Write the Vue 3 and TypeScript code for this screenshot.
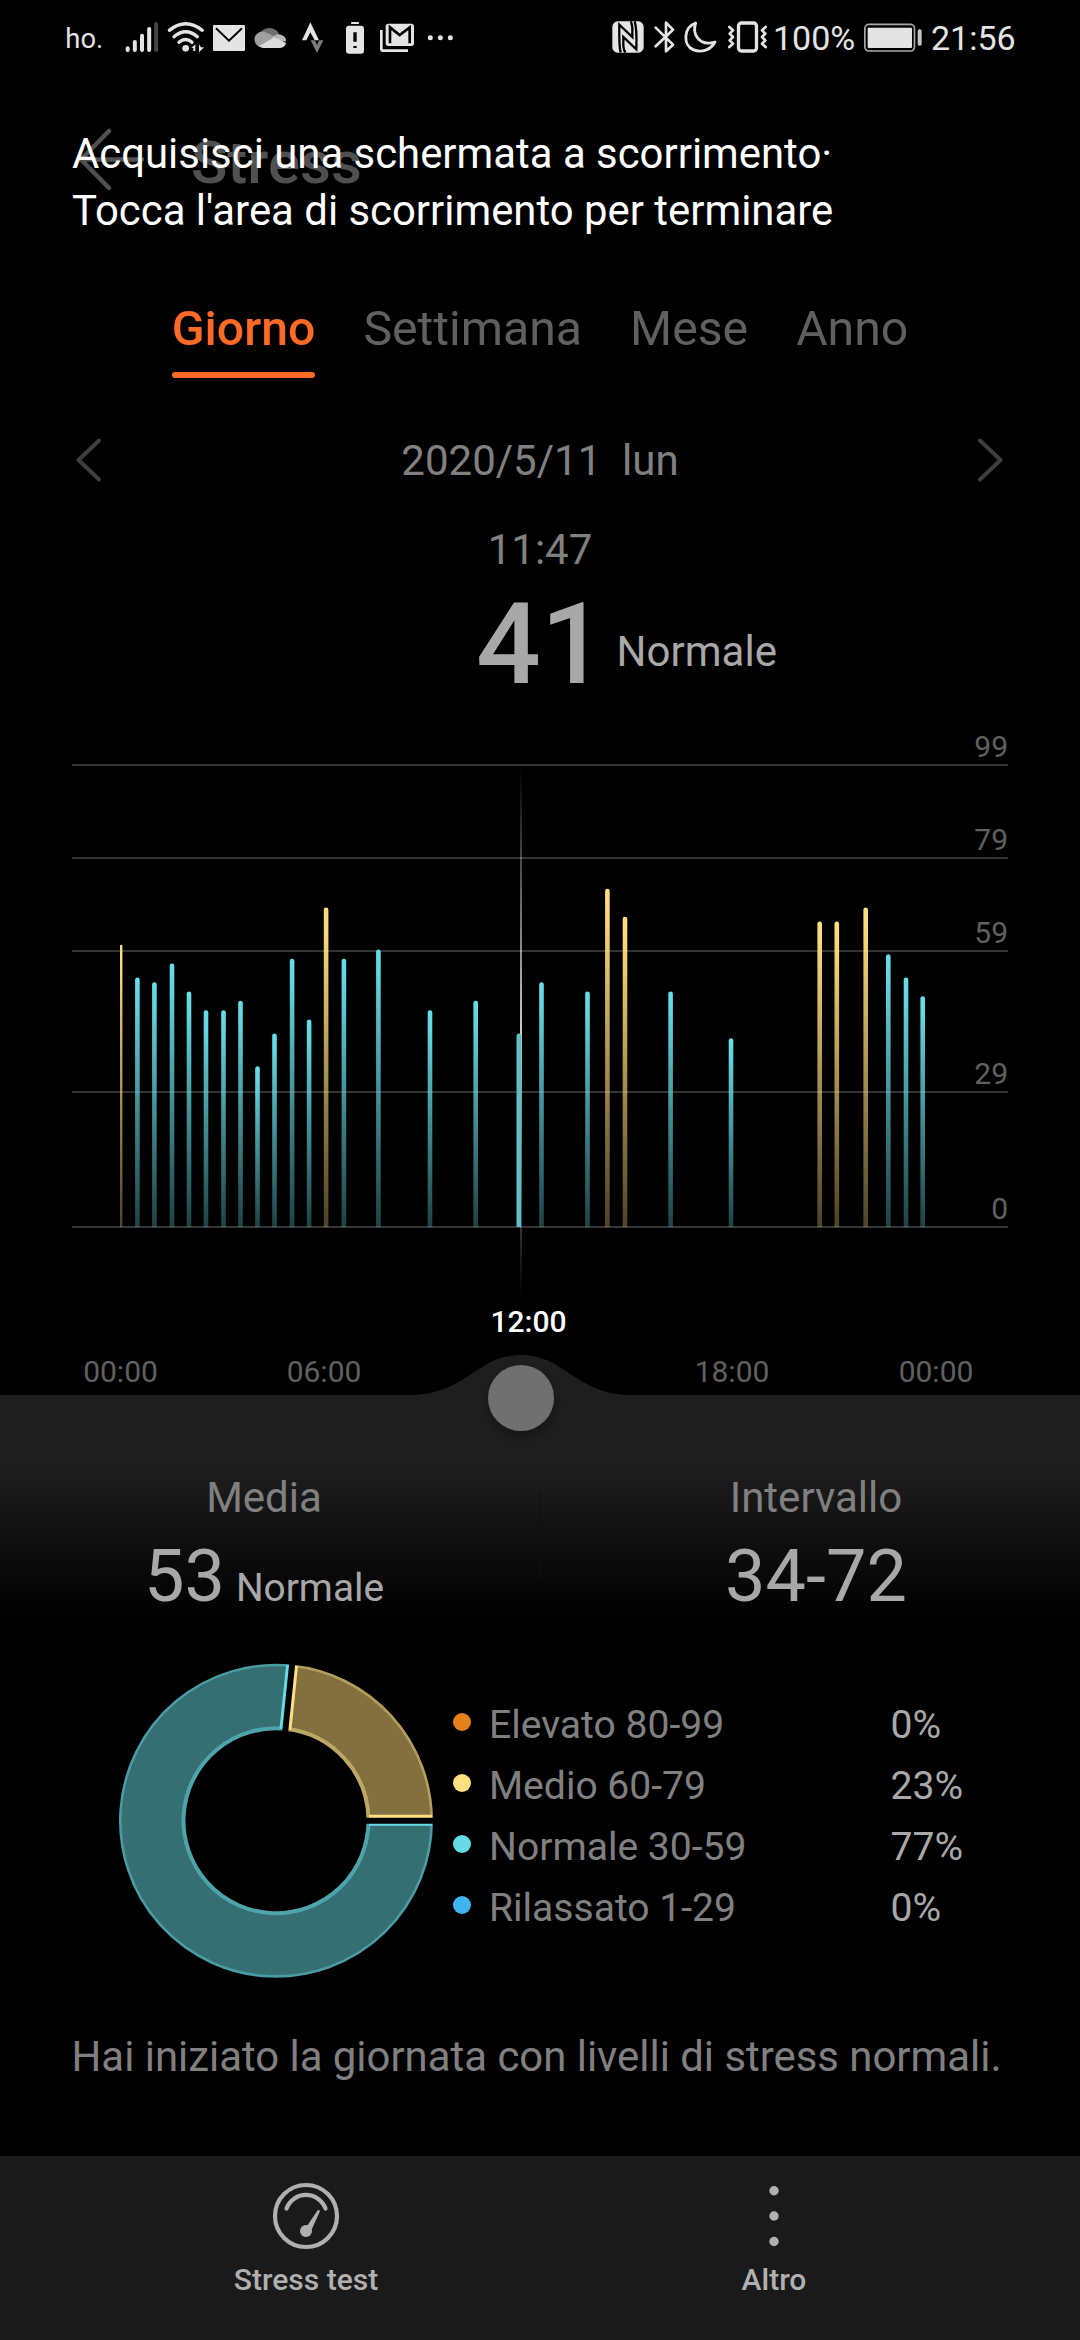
<script setup lang="ts">
interface Reading {
  x: number
  value: number
  width?: number
}

interface Level {
  name: string
  percent: string
  color: string
}

const tabs: string[] = ['Giorno', 'Settimana', 'Mese', 'Anno']
const activeTab = 'Giorno'

const BASE = 1226
const STEP = 4.67

const readings: Reading[] = [
  { x: 121.2, value: 60, width: 2.4 },
  { x: 137.4, value: 53 },
  { x: 154.4, value: 52 },
  { x: 172, value: 56 },
  { x: 189, value: 50 },
  { x: 206, value: 46 },
  { x: 223.5, value: 46 },
  { x: 240.5, value: 48 },
  { x: 257.5, value: 34 },
  { x: 274.5, value: 41 },
  { x: 292.1, value: 57 },
  { x: 309.1, value: 44 },
  { x: 326.1, value: 68 },
  { x: 343.9, value: 57 },
  { x: 378.4, value: 59 },
  { x: 430, value: 46 },
  { x: 475.7, value: 48 },
  { x: 541.5, value: 52 },
  { x: 587.5, value: 50 },
  { x: 607.4, value: 72 },
  { x: 625, value: 66 },
  { x: 670.6, value: 50 },
  { x: 731, value: 40 },
  { x: 819.7, value: 65 },
  { x: 836.8, value: 65 },
  { x: 865.7, value: 68 },
  { x: 888.3, value: 58 },
  { x: 906, value: 53 },
  { x: 922.7, value: 49 },
]

const grid = [
  { y: 764, label: '99' },
  { y: 857, label: '79' },
  { y: 950, label: '59' },
  { y: 1091, label: '29' },
  { y: 1226, label: '0' },
]

const hours = [
  { x: 120.5, label: '00:00' },
  { x: 324, label: '06:00' },
  { x: 732, label: '18:00' },
  { x: 936, label: '00:00' },
]

const levels: Level[] = [
  { name: 'Elevato 80-99', percent: '0%', color: '#e6801a' },
  { name: 'Medio 60-79', percent: '23%', color: '#ffdf80' },
  { name: 'Normale 30-59', percent: '77%', color: '#67dbe5' },
  { name: 'Rilassato 1-29', percent: '0%', color: '#40b4f2' },
]

const barTop = (value: number): number => BASE - 1 - value * STEP

const barPath = (r: Reading): string => {
  const half = (r.width ?? 4.6) / 2
  const top = barTop(r.value)
  return `M${r.x - half} ${BASE + 1}V${top + half}A${half} ${half} 0 0 1 ${r.x + half} ${top + half}V${BASE + 1}Z`
}

// Donut geometry; angles are in degrees, counter-clockwise from three o'clock.
const CX = 176
const CY = 180.7
const SPLIT = 84.1

const point = (radius: number, angle: number): string => {
  const a = (angle * Math.PI) / 180
  return `${(CX + radius * Math.cos(a)).toFixed(2)} ${(CY - radius * Math.sin(a)).toFixed(2)}`
}

const arc = (radius: number, from: number, to: number): string =>
  `M${point(radius, from)}A${radius} ${radius} 0 ${to - from > 180 ? 1 : 0} 0 ${point(radius, to)}`

const sector = (from: number, to: number): string => {
  const large = to - from > 180 ? 1 : 0
  return `${arc(156, from, to)}L${point(93, to)}A93 93 0 ${large} 1 ${point(93, from)}Z`
}
</script>

<template>
  <div class="screen">
    <div class="status">
      <svg width="440" height="80" viewBox="0 0 1320 240" fill="#e4e4e4">
        <text x="76" y="143" font-size="82">ho.</text>
        <g stroke="#e4e4e4" stroke-width="12" stroke-linecap="round">
          <path d="M263 145V150M284.500 126V150M306 107V150M327.500 87V150" />
          <path d="M348.500 72V150" stroke="#454545" />
        </g>
        <g fill="none" stroke="#e4e4e4" stroke-width="10" stroke-linecap="round">
          <path d="M388 91Q437 52 487 91" />
          <path d="M402 110Q437 80 472 110" />
          <path d="M417 127Q437 110 456 127" />
        </g>
        <circle cx="437" cy="145" r="10" />
        <path d="M466 133v20h-6v-9h-6zM477 133v24l15-15h-9z" />
        <rect x="519" y="75" width="96" height="78" rx="4" />
        <path d="M528 85L567 122L606 85" fill="none" stroke="#000" stroke-width="6" />
        <path d="M664 94A33 33 0 0 1 717 101L690 122L655 110Z" fill="#6e6e6e" />
        <path d="M657 140A24 24 0 0 1 655 98Q670 88 707 112L662 142Z" fill="#a0a0a0" />
        <path d="M690 122Q706 97 725 105Q740 112 738 124Q720 126 707 112Z" fill="#b8b8b8" />
        <path d="M658 138L704 111L738 129Q735 143 720 144H668Q662 143 658 138Z" fill="#dcdcdc" />
        <path d="M786 121L811 67L837 121H824L811 97L799 121Z" />
        <path d="M812 121H824L831 135L838 121H850L831 159Z" fill="#7c7c7c" />
        <rect x="933" y="66" width="24" height="6" rx="2" />
        <rect x="918" y="77" width="54" height="84" rx="9" />
        <path d="M945 97V125M945 138V144" stroke="#000" stroke-width="10" />
        <path d="M1024 90V146Q1024 152 1030 152H1104" fill="none" stroke="#e4e4e4" stroke-width="8" />
        <rect x="1037" y="71" width="85" height="67" rx="8" />
        <path d="M1050 130V82L1079 105L1109 82V130" fill="none" stroke="#000" stroke-width="8" />
        <circle cx="1171" cy="113" r="7.500" />
        <circle cx="1201" cy="113" r="7.500" />
        <circle cx="1231" cy="113" r="7.500" />
      </svg>
      <svg width="450" height="80" viewBox="0 0 1350 240" fill="#e4e4e4">
        <rect x="67" y="64" width="94" height="94" rx="16" />
        <path
          d="M92 157Q87 140 88 74L127 111V84Q126 70 122 64M134 64Q141 85 139 148L100 111V138Q102 152 106 158"
          fill="none"
          stroke="#000"
          stroke-width="7"
        />
        <path
          d="M197 83L249 134L228 154V68L249 89L197 139"
          fill="none"
          stroke="#e4e4e4"
          stroke-width="8"
          stroke-linecap="round"
          stroke-linejoin="round"
        />
        <path
          d="M317 69C278 83 280 136 309 149C335 160 362 150 375 126C350 134 333 128 322 113C312 99 312 84 317 69Z"
          fill="none"
          stroke="#e4e4e4"
          stroke-width="8.500"
          stroke-linejoin="round"
        />
        <rect x="445.500" y="69" width="54" height="84" rx="9" fill="none" stroke="#e4e4e4" stroke-width="10" />
        <path
          d="M418 81L429 91L419 101L429 111L419 121L429 131L418 141M527 81L516 91L526 101L516 111L526 121L516 131L527 141"
          fill="none"
          stroke="#e4e4e4"
          stroke-width="8"
          stroke-linecap="round"
          stroke-linejoin="round"
        />
        <text x="549" y="150" font-size="102">100%</text>
        <rect x="824.500" y="73" width="149" height="80" rx="12" fill="none" stroke="#a8a8a8" stroke-width="5" />
        <rect x="833" y="83" width="133" height="61" rx="3" />
        <rect x="983" y="88" width="12" height="49" rx="5" fill="#c4c4c4" />
        <text x="1023" y="150" font-size="102">21:56</text>
      </svg>
    </div>

    <header class="header">
      <svg class="back" width="78" height="70" viewBox="0 0 78 70">
        <path d="M37 4L9 32.500L37 61M10 32.500H70" />
      </svg>
      <h1 class="title">Stress</h1>
      <p class="notice">Acquisisci una schermata a scorrimento·<br />Tocca l'area di scorrimento per terminare</p>
    </header>

    <nav class="tabs">
      <div v-for="tab in tabs" :key="tab" class="tab" :class="{ active: tab === activeTab }">{{ tab }}</div>
    </nav>

    <div class="date">
      <svg class="chevron" width="40" height="60" viewBox="0 0 40 60"><path d="M29 9.500L8.500 29L29 48.500" /></svg>
      <span class="day">2020/5/11&nbsp; lun</span>
      <svg class="chevron" width="40" height="60" viewBox="0 0 40 60"><path d="M10 9.500L30.500 29L10 48.500" /></svg>
    </div>

    <div class="time">11:47</div>
    <div class="current">
      <span class="number">41</span>
      <span class="state">Normale</span>
    </div>

    <svg class="chart" width="1080" height="715" viewBox="0 735 1080 715">
      <defs>
        <linearGradient id="normal" x1="0" y1="0" x2="0" y2="1">
          <stop offset="0" stop-color="#67dfea" />
          <stop offset="0.1" stop-color="#67dfea" stop-opacity="0.95" />
          <stop offset="1" stop-color="#67dbe3" stop-opacity="0.3" />
        </linearGradient>
        <linearGradient id="medium" x1="0" y1="0" x2="0" y2="1">
          <stop offset="0" stop-color="#ffdf80" />
          <stop offset="0.1" stop-color="#ffdc78" stop-opacity="0.97" />
          <stop offset="1" stop-color="#ffdc80" stop-opacity="0.3" />
        </linearGradient>
        <linearGradient id="cursor" x1="0" y1="0" x2="0" y2="1">
          <stop offset="0" stop-color="#fff" stop-opacity="0" />
          <stop offset="0.5" stop-color="#fff" stop-opacity="0.8" />
          <stop offset="1" stop-color="#fff" stop-opacity="0" />
        </linearGradient>
        <filter id="shade" x="-50%" y="-50%" width="200%" height="200%">
          <feDropShadow dx="0" dy="6" stdDeviation="7" flood-color="#000" flood-opacity="0.3" />
        </filter>
      </defs>

      <g v-for="line in grid" :key="line.label">
        <rect x="72" :y="line.y" width="936" height="2" fill="#333" />
        <text class="tick" x="1008" :y="line.y - 7.5" text-anchor="end">{{ line.label }}</text>
      </g>

      <path
        v-for="r in readings"
        :key="r.x"
        :d="barPath(r)"
        :fill="r.value >= 60 ? 'url(#medium)' : 'url(#normal)'"
      />
      <rect x="520" y="766" width="2" height="530" fill="url(#cursor)" />
      <path :d="barPath({ x: 518.8, value: 41 })" fill="#5bbfc8" />

      <text v-for="h in hours" :key="h.x" class="tick" :x="h.x" y="1381.5" text-anchor="middle">{{ h.label }}</text>
      <text class="tick selected" x="528.5" y="1331.5" text-anchor="middle">12:00</text>

      <path d="M0 1395H410C467 1395 476 1355 521 1355S575 1395 632 1395H1080V1450H0Z" fill="#1e1e1e" />
      <circle cx="521" cy="1398" r="33" fill="#6f6f6f" filter="url(#shade)" />
    </svg>

    <section class="summary">
      <div class="metric">
        <div class="caption">Media</div>
        <div class="figure">53<span class="unit">Normale</span></div>
      </div>
      <div class="divider"></div>
      <div class="metric">
        <div class="caption">Intervallo</div>
        <div class="figure">34-72</div>
      </div>
    </section>

    <section class="breakdown">
      <svg width="350" height="360" viewBox="0 0 350 360" fill="none">
        <path :d="sector(SPLIT, 360)" fill="#356f72" />
        <path :d="arc(155.7, SPLIT, 360)" stroke="#4a9ba3" stroke-width="2.600" />
        <path :d="arc(92.5, SPLIT, 360)" stroke="#4ea4ab" stroke-width="4" />
        <path :d="sector(0, SPLIT)" fill="#82713f" />
        <path :d="arc(155.7, 0, SPLIT)" stroke="#b39e5c" stroke-width="2.600" />
        <path :d="arc(92.5, 0, SPLIT)" stroke="#bda766" stroke-width="4" />
        <path :d="`M269 ${CY}H332`" stroke="#67dbe3" stroke-width="10" />
        <path :d="`M269 ${CY - 3}H332`" stroke="#ffdf80" stroke-width="6" />
        <path :d="`M266 ${CY}H334`" stroke="#000" stroke-width="6" />
        <g :transform="`rotate(${90 - SPLIT} ${CX} ${CY})`">
          <rect :x="CX - 6" :y="CY - 156" width="6" height="64" fill="#67dbe3" />
          <rect :x="CX" :y="CY - 156" width="6" height="64" fill="#ffdf80" />
          <rect :x="CX - 3" :y="CY - 159" width="6" height="70" fill="#000" />
        </g>
      </svg>
      <ul class="legend">
        <li v-for="level in levels" :key="level.name" class="level">
          <i class="dot" :style="{ background: level.color }"></i>
          <span class="name">{{ level.name }}</span>
          <span class="percent">{{ level.percent }}</span>
        </li>
      </ul>
    </section>

    <p class="message">Hai iniziato la giornata con livelli di stress normali.</p>

    <footer class="actions">
      <div class="action">
        <svg width="68" height="68" viewBox="0 0 68 68">
          <circle cx="34" cy="34" r="31" fill="none" stroke="#b0b0b0" stroke-width="4.200" />
          <path
            d="M14.500 26.500A20.800 20.800 0 0 1 53.500 26.500"
            fill="none"
            stroke="#b0b0b0"
            stroke-width="4.200"
            stroke-linecap="round"
          />
          <circle cx="34" cy="49" r="6" fill="#b0b0b0" />
          <path d="M35 44L45.500 28.500Q47 27.500 48 29L39.500 48Z" fill="#b0b0b0" />
        </svg>
        <span class="action-name">Stress test</span>
      </div>
      <div class="action">
        <svg width="68" height="68" viewBox="0 0 68 68" fill="#b0b0b0">
          <circle cx="34" cy="8.700" r="4.700" />
          <circle cx="34" cy="34" r="4.700" />
          <circle cx="34" cy="59.500" r="4.700" />
        </svg>
        <span class="action-name">Altro</span>
      </div>
    </footer>
  </div>
</template>

<style>
body {
  background: #000;
}
</style>

<style scoped>
.screen {
  width: 1080px;
  height: 2340px;
  overflow: hidden;
  background: #000;
  color: #808080;
  font-family: Roboto, "Liberation Sans", sans-serif;
  display: flex;
  flex-direction: column;
}

.screen > * {
  flex: none;
  box-sizing: border-box;
}

.screen svg {
  display: block;
  flex: none;
}

.screen .chart {
  overflow: visible;
}

.status {
  height: 80px;
  padding: 0 40px;
  display: flex;
  justify-content: space-between;
}

.header {
  position: relative;
  height: 164px;
  padding-left: 72px;
  display: flex;
  align-items: center;
}

.back path {
  fill: none;
  stroke: #505050;
  stroke-width: 4.5;
  stroke-linecap: round;
  stroke-linejoin: round;
}

.title {
  margin: 0 0 0 41px;
  color: #505050;
  font-size: 60px;
  font-weight: 500;
}

.notice {
  position: absolute;
  left: 72px;
  top: 45.3px;
  margin: 0;
  color: #fff;
  font-size: 41.88px;
  line-height: 57px;
  white-space: nowrap;
}

.tabs {
  height: 156px;
  padding-top: 55px;
  display: flex;
  justify-content: center;
  align-items: flex-start;
  gap: 48px;
}

.tab {
  color: #606060;
  font-size: 48.2px;
  line-height: 60px;
}

.tab.active {
  color: #ff6a26;
  font-weight: 500;
}

.tab.active::after {
  content: "";
  display: block;
  height: 6px;
  margin-top: 13px;
  border-radius: 3px;
  background: #ff6a26;
}

.date {
  height: 121px;
  padding: 0 70px;
  display: flex;
  align-items: center;
  justify-content: space-between;
  font-size: 42px;
}

.chevron path {
  fill: none;
  stroke: #3e3e3e;
  stroke-width: 4;
  stroke-linecap: round;
  stroke-linejoin: round;
}

.time {
  height: 57px;
  font-size: 42px;
  line-height: 57px;
  text-align: center;
}

.current {
  height: 157px;
  padding: 6px 0 0 476px;
  display: flex;
  align-items: baseline;
  color: #a8a8a8;
}

.number {
  font-size: 114px;
  font-weight: 500;
  line-height: 120px;
}

.state {
  margin-left: 11px;
  position: relative;
  top: -17px;
  font-size: 42px;
}

.tick {
  font-size: 30px;
  fill: #606060;
}

.selected {
  fill: #fff;
  font-weight: 500;
}

.summary {
  height: 190px;
  padding-top: 18px;
  display: grid;
  grid-template-columns: 1fr 24px 1fr;
  background: linear-gradient(#1e1e1e 14px, #000 170px);
  text-align: center;
}

.caption {
  font-size: 42px;
  line-height: 60px;
}

.figure {
  margin-top: 8.7px;
  color: #a8a8a8;
  font-size: 72px;
  line-height: 80px;
}

.unit {
  margin-left: 11px;
  font-size: 38.8px;
}

.divider {
  justify-self: center;
  width: 1px;
  height: 90px;
  margin-top: 22px;
  background: linear-gradient(rgba(0, 0, 0, 0.3), rgba(24, 24, 24, 0.4));
}

.breakdown {
  height: 360px;
  padding-left: 100px;
  display: flex;
}

.legend {
  margin: 0;
  padding: 54px 0 0 3px;
  list-style: none;
}

.level {
  height: 61px;
  display: flex;
  align-items: center;
  font-size: 39.1px;
}

.dot {
  width: 18px;
  height: 18px;
  margin: 0 18px 5px 0;
  border-radius: 50%;
}

.name {
  width: 401.5px;
}

.percent {
  color: #a8a8a8;
}

.message {
  height: 156px;
  margin: 0;
  padding: 26.6px 0 0 71.5px;
  font-size: 41.88px;
  line-height: 60px;
  white-space: nowrap;
}

.actions {
  height: 184px;
  padding: 26px 72px 0;
  display: flex;
  background: #1a1a1a;
}

.action {
  flex: 1;
  display: flex;
  flex-direction: column;
  align-items: center;
  color: #b0b0b0;
}

.action-name {
  margin-top: 9.7px;
  font-size: 30px;
  font-weight: 500;
  line-height: 40px;
}
</style>
